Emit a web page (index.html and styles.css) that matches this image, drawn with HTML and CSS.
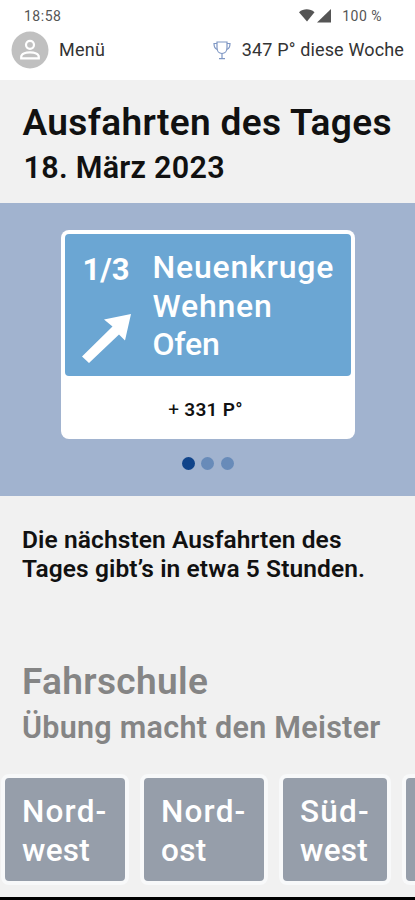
FILE: index.html
```html
<!DOCTYPE html>
<html lang="de">
<head>
    <meta charset="UTF-8">
    <meta name="viewport" content="width=device-width, initial-scale=1.0">
    <title>Ausfahrten des Tages</title>
    <link rel="stylesheet" href="styles.css">
</head>
<body>
    <header class="top">
        <div class="status">
            <span class="clock">18:58</span>
            <svg class="signal" width="34" height="15" viewBox="0 0 34 15">
                <path d="M0 4.200C4.500.400 11 .400 15.500 4.200L8 13.500z" fill="#555"/>
                <path d="M18 14.500L32 1v13.500z" fill="#555"/>
            </svg>
            <span class="battery">100 %</span>
        </div>
        <div class="menubar">
            <svg class="avatar" width="38" height="38" viewBox="0 0 38 38">
                <circle cx="19" cy="19" r="18.500" fill="#c0c0c0"/>
                <circle cx="19" cy="13.800" r="4" fill="none" stroke="#fff" stroke-width="2.200"/>
                <path d="M10.200 27.300v-1.400c0-3 4.300-4.600 8.800-4.600s8.800 1.600 8.800 4.600v1.400z" fill="none" stroke="#fff" stroke-width="2.200"/>
            </svg>
            <span class="menu">Menü</span>
            <svg class="cup" width="18" height="19" viewBox="0 0 18 19">
                <g fill="none" stroke="#7f97c4" stroke-width="1.200">
                    <path d="M4 1h10v6c0 3-2 5.500-5 5.500S4 10 4 7z"/>
                    <path d="M4 2.500H1c0 3.500 1.200 5.500 3.500 6M14 2.500h3c0 3.500-1.200 5.500-3.500 6M9 12.500v5M6 17.700h6"/>
                </g>
            </svg>
            <span class="points">347 P° diese Woche</span>
        </div>
    </header>

    <section class="intro">
        <h1>Ausfahrten des Tages</h1>
        <h2>18. März 2023</h2>
    </section>

    <section class="slider">
        <div class="card">
            <div class="sign">
                <div class="sign-left">
                    <span class="count">1/3</span>
                    <svg class="arrow" width="50" height="52" viewBox="0 0 50 52">
                        <path d="M49 2L43 28.500 37 22.500 7 51 0 44.500 30.500 14.500 22 7.500z" fill="#fff"/>
                    </svg>
                </div>
                <div class="places">Neuenkruge<br>Wehnen<br><span class="short">Ofen</span></div>
            </div>
            <div class="score"><span class="plus">+</span> 331 P°</div>
        </div>
        <div class="dots">
            <span class="dot active"></span>
            <span class="dot"></span>
            <span class="dot"></span>
        </div>
    </section>

    <p class="next">Die nächsten Ausfahrten des<br>Tages gibt’s in etwa 5 Stunden.</p>

    <section class="school">
        <h1>Fahrschule</h1>
        <h2>Übung macht den Meister</h2>
        <div class="regions">
            <div class="region">Nord-<br><span class="low">west</span></div>
            <div class="region">Nord-<br><span class="low">ost</span></div>
            <div class="region small">Süd-<br><span class="low">west</span></div>
            <div class="region last"></div>
        </div>
    </section>
    <div class="navbar"></div>
</body>
</html>
```

FILE: styles.css
```css
* {
    box-sizing: border-box;
}

body {
    display: flex;
    flex-direction: column;
    height: 900px;
    margin: 0;
    overflow: hidden;
    background-color: #f1f1f1;
    color: #111;
    font-family: Roboto, sans-serif;
}

h1, h2, p {
    margin: 0;
    font-weight: 600;
    white-space: nowrap;
}

h1 {
    font-size: 37px;
    line-height: 46px;
    letter-spacing: 0.35px;
}

h2 {
    font-size: 30.500px;
    line-height: 44px;
    letter-spacing: 0.27px;
}

.top {
    height: 80px;
    background-color: #fff;
}

.status {
    display: flex;
    align-items: center;
    height: 31px;
    padding: 0 33px 0 24px;
    font-size: 14px;
    color: #555;
}

.clock {
    letter-spacing: 0.5px;
}

.signal {
    margin-left: auto;
    margin-right: 9px;
}

.battery {
    letter-spacing: 0.5px;
}

.menubar {
    display: flex;
    align-items: center;
    height: 38px;
    padding: 0 11px 0 11px;
    font-size: 18px;
    line-height: 36px;
    color: #333;
    white-space: nowrap;
}

.menu {
    margin-left: 10px;
    letter-spacing: 0.3px;
}

.cup {
    margin-left: auto;
    margin-right: 11px;
}

.points {
    letter-spacing: 0.15px;
}

.intro {
    height: 123px;
    padding: 20px 0 0 22.500px;
}

.intro h2 {
    padding-left: 1px;
}

.slider {
    height: 293px;
    padding-top: 27px;
    background-color: #a1b3cf;
}

.card {
    width: 294px;
    height: 209px;
    margin: 0 auto;
    padding: 4px;
    border-radius: 8px;
    background-color: #fff;
}

.sign {
    display: flex;
    height: 142px;
    padding: 14px 0 0 18px;
    border-radius: 4px;
    background-color: #6ba6d3;
    color: #fff;
}

.sign-left {
    width: 70px;
}

.count {
    display: block;
    height: 64px;
    font-size: 31px;
    font-weight: 700;
    line-height: 43px;
}

.arrow {
    display: block;
    margin-left: -1px;
}

.places {
    font-size: 32px;
    font-weight: 500;
    line-height: 38.500px;
    letter-spacing: 0.8px;
}

.places .short {
    letter-spacing: -0.2px;
}

.score {
    line-height: 60px;
    padding: 4px 4px 0 0;
    text-align: center;
    font-size: 19px;
    font-weight: 600;
    letter-spacing: 0.3px;
    color: #111;
}

.plus {
    font-weight: 400;
}

.dots {
    display: flex;
    justify-content: center;
    gap: 6.500px;
    margin-top: 18px;
}

.dot {
    width: 13px;
    height: 13px;
    border-radius: 50%;
    background-color: #688bb9;
}

.dot.active {
    background-color: #10448a;
}

.next {
    height: 161px;
    padding: 29px 0 0 22px;
    font-size: 24.500px;
    line-height: 29px;
    letter-spacing: 0.1px;
}

.school {
    height: 240px;
    padding-top: 2px;
    color: #858585;
}

.school h1,
.school h2 {
    padding-left: 22px;
}

.school h2 {
    padding-top: 1px;
}

.regions {
    display: flex;
    gap: 11px;
    margin-top: 24px;
    padding-left: 1px;
    overflow: hidden;
}

.region {
    flex: none;
    width: 128px;
    height: 111px;
    padding: 15px 0 0 17px;
    border: 4px solid #f8f9fa;
    border-radius: 8px;
    background-color: #969eaa;
    color: #fff;
    font-size: 31.500px;
    font-weight: 500;
    line-height: 38.500px;
    letter-spacing: 1.2px;
}

.region .low {
    letter-spacing: 0.3px;
}

.region.small {
    width: 112px;
}

/* next tile peeks in from the right edge */
.region.last {
    flex: 1;
    padding: 0;
    border-right: none;
    border-radius: 8px 0 0 8px;
}

.navbar {
    height: 3px;
    background-color: #000;
}
```
